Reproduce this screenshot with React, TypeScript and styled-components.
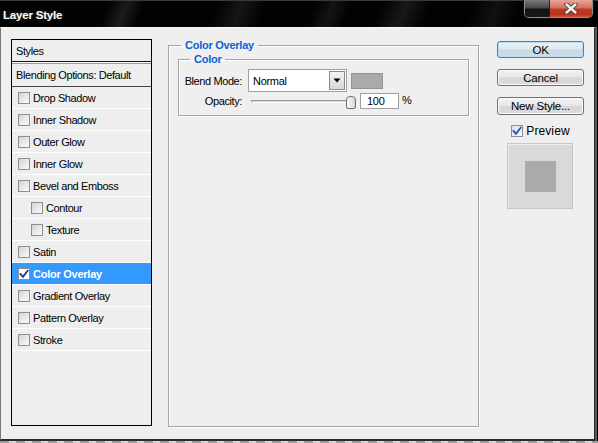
import React from "react";
import styled, { createGlobalStyle } from "styled-components";

const Global = createGlobalStyle`
  html, body { margin: 0; padding: 0; background: #000; }
  body { font-family: "Liberation Sans", Arial, sans-serif; font-size: 11px; color: #000; }
  * { box-sizing: border-box; }
`;

const Screen = styled.div`
  width: 598px;
  height: 443px;
  overflow: hidden;
  background: repeating-linear-gradient(90deg, #9c9c9c 0 9px, #d8d8d8 9px 16px);
`;

const Window = styled.div`
  width: 598px;
  height: 441px;
  display: flex;
  flex-direction: column;
  background: #5a5a5a;
  border-right: 1px solid #000;
`;

const TitleBar = styled.div`
  height: 27px;
  flex: none;
  display: flex;
  align-items: flex-start;
  margin-right: -1px;
  background:
    linear-gradient(112deg, transparent 0 18%, rgba(255,255,255,0.10) 21%, transparent 24%,
      transparent 36%, rgba(255,255,255,0.08) 40%, transparent 44%,
      transparent 52%, rgba(255,255,255,0.07) 55%, transparent 58%,
      transparent 63%, rgba(255,255,255,0.09) 67%, transparent 71%,
      transparent 78%, rgba(255,255,255,0.06) 82%, transparent 86%),
    #020202;
  border-top: 1px solid #3a3a3a;
`;

const Title = styled.div`
  font-weight: 700;
  font-size: 11.5px;
  letter-spacing: -0.2px;
  color: #fff;
  padding: 8px 0 0 3px;
  flex: 1;
  text-shadow: 0 0 4px rgba(255,255,255,0.25);
`;

const Controls = styled.div`
  display: flex;
  height: 18px;
  margin-top: -1px;
  margin-right: 5px;
  border: 1px solid #8a8a8a;
  border-top: none;
  border-radius: 0 0 5px 5px;
  overflow: hidden;
  box-shadow: 0 0 0 1px #111;
`;

const CtrlButton = styled.div<{ $close?: boolean }>`
  width: ${(p) => (p.$close ? 43 : 24)}px;
  display: flex;
  align-items: center;
  justify-content: center;
  border-left: ${(p) => (p.$close ? "1px solid #222" : "none")};
  background: ${(p) =>
    p.$close
      ? "linear-gradient(#e7a79a 0%, #d5705c 45%, #c23a20 55%, #b8341c 85%, #d8563c 100%)"
      : "linear-gradient(#7a7a7a 0%, #4a4a4a 45%, #111 55%, #1a1a1a 100%)"};
`;

const Body = styled.div`
  flex: 1;
  display: flex;
  align-items: flex-start;
  background: #efefef;
  border-left: 1px solid #777;
  border-right: 1px solid #2a2a2a;
  border-bottom: 2px solid #2a2a2a;
  border-top: 1px solid #fafafa;
  margin-right: 2px;
  padding: 11px 0 0 10px;
`;

/* Left styles list */
const StylesPanel = styled.div`
  width: 141px;
  height: 387px;
  border: 1px solid #000;
  background: #eeeeee;
  display: flex;
  flex-direction: column;
  flex: none;
`;

const PanelHeader = styled.div`
  height: 22px;
  display: flex;
  align-items: center;
  padding-left: 4px;
  letter-spacing: -0.4px;
  border-bottom: 1px solid #111;
`;

const HeaderDivider = styled.div`
  height: 1px;
  box-sizing: content-box;
  background: #fafafa;
  border-bottom: 1px solid #9a9a9a;
`;

const BlendRow = styled.div`
  height: 23px;
  display: flex;
  align-items: center;
  padding-left: 4px;
  letter-spacing: -0.4px;
  border-bottom: 1px solid #444;
`;

const StyleRow = styled.div<{ $indent?: boolean; $active?: boolean }>`
  height: 22px;
  display: flex;
  align-items: center;
  gap: 3px;
  padding-left: ${(p) => (p.$indent ? 19 : 6)}px;
  border-bottom: 1px solid #ffffff;
  background: ${(p) => (p.$active ? "#3399ff" : "transparent")};
  color: ${(p) => (p.$active ? "#fff" : "#000")};
  font-weight: ${(p) => (p.$active ? 700 : 400)};
  letter-spacing: ${(p) => (p.$active ? "-0.25px" : "-0.4px")};
`;

const Box = styled.span<{ $checked?: boolean; $blue?: boolean }>`
  width: 12px;
  height: 12px;
  flex: none;
  border: 1px solid #8e8e8e;
  display: flex;
  align-items: center;
  justify-content: center;
  background: ${(p) =>
    p.$checked
      ? p.$blue
        ? "linear-gradient(135deg, #d6e2f0, #f6f9fc)"
        : "#ffffff"
      : "linear-gradient(135deg, #d2d2d2 0%, #e8e8e8 50%, #fbfbfb 100%)"};
`;

/* Middle group */
const Group = styled.fieldset`
  margin: 0 0 0 16px;
  padding: 0 9px 0 9px;
  width: 311px;
  height: 388px;
  flex: none;
  border: 1px solid #a4a4a4;
  box-shadow: 1px 1px 0 #ffffff, inset 1px 1px 0 #ffffff;
  min-inline-size: 0;
`;

const Legend = styled.legend<{ $offset: number }>`
  margin-left: ${(p) => p.$offset}px;
  padding: 0 4px;
  height: 13px;
  line-height: 13px;
  font-weight: 700;
  font-size: 11px;
  letter-spacing: -0.25px;
  color: #0a64d0;
`;

const SubGroup = styled.fieldset`
  margin: 1px 0 0 0;
  padding: 0 0 6px 0;
  width: 291px;
  border: 1px solid #a4a4a4;
  box-shadow: 1px 1px 0 #ffffff, inset 1px 1px 0 #ffffff;
  min-inline-size: 0;
`;

const FieldRow = styled.div<{ $top: number; $h: number }>`
  display: flex;
  align-items: center;
  height: ${(p) => p.$h}px;
  margin-top: ${(p) => p.$top}px;
`;

const Label = styled.div<{ $w: number; $gap: number }>`
  width: ${(p) => p.$w}px;
  margin-right: ${(p) => p.$gap}px;
  text-align: right;
  letter-spacing: -0.4px;
  flex: none;
`;

const Select = styled.div`
  width: 99px;
  height: 23px;
  background: #fff;
  border: 1px solid #a0a0a0;
  display: flex;
  align-items: center;
  padding: 1px;
  flex: none;
`;

const SelectText = styled.div`
  flex: 1;
  padding-left: 3px;
  letter-spacing: -0.3px;
`;

const SelectButton = styled.div`
  width: 16px;
  height: 19px;
  border: 1px solid #8a8a8a;
  background: linear-gradient(#f4f4f4, #d8d8d8);
  display: flex;
  align-items: center;
  justify-content: center;
`;

const Swatch = styled.div`
  width: 32px;
  height: 16px;
  margin-left: 4px;
  background: #aaaaaa;
  border: 1px solid #959595;
`;

const Slider = styled.div`
  position: relative;
  width: 105px;
  height: 16px;
  flex: none;
  display: flex;
  align-items: center;
`;

const Track = styled.div`
  width: 100px;
  height: 3px;
  margin-top: 1px;
  border-top: 1px solid #9c9c9c;
  border-left: 1px solid #9c9c9c;
  border-bottom: 1px solid #ffffff;
  background: #d4d4d4;
`;

const Thumb = styled.div`
  position: absolute;
  left: 95px;
  top: 3px;
  width: 10px;
  height: 13px;
  border: 1px solid #6e6e6e;
  border-radius: 4px 4px 2px 2px;
  background: linear-gradient(90deg, #fafafa, #d6d6d6);
`;

const NumInput = styled.div`
  width: 39px;
  height: 16px;
  margin-left: 4px;
  padding-left: 6px;
  background: #fff;
  border: 1px solid #a0a0a0;
  display: flex;
  align-items: center;
  letter-spacing: -0.3px;
`;

const Percent = styled.div`
  margin-left: 3px;
  margin-top: -3px;
`;

/* Right column */
const Actions = styled.div`
  width: 87px;
  margin-left: 18px;
  margin-top: 2px;
  display: flex;
  flex-direction: column;
  align-items: center;
  flex: none;
`;

const Button = styled.div<{ $primary?: boolean; $h?: number }>`
  width: 87px;
  height: ${(p) => p.$h ?? 17}px;
  margin-bottom: 11px;
  border: 1px solid ${(p) => (p.$primary ? "#3c86c2" : "#707070")};
  border-radius: 3px;
  display: flex;
  align-items: center;
  justify-content: center;
  font-size: 11.5px;
  letter-spacing: -0.2px;
  background: ${(p) =>
    p.$primary
      ? "linear-gradient(#eef4f8 0%, #dde8ef 48%, #c9d9e4 52%, #cfdde8 100%)"
      : "linear-gradient(#f3f3f3 0%, #e6e6e6 48%, #d6d6d6 52%, #dcdcdc 100%)"};
  box-shadow: ${(p) => (p.$primary ? "inset 0 0 0 1px #b8dcf3" : "inset 0 0 0 1px #fbfbfb")};
`;

const PreviewToggle = styled.div`
  display: flex;
  align-items: center;
  gap: 3px;
  margin-top: -2px;
  height: 13px;
  font-size: 12px;
  letter-spacing: 0.1px;
`;

const PreviewBox = styled.div`
  width: 66px;
  height: 66px;
  margin-top: 6px;
  margin-left: -1px;
  background: #d9d9d9;
  border: 1px solid #c6c6c6;
  box-shadow: inset 1px 1px 0 #ececec;
  display: flex;
  align-items: center;
  justify-content: center;
`;

const PreviewSwatch = styled.div`
  width: 31px;
  height: 31px;
  background: #aaaaaa;
`;

const Check = ({ color }: { color: string }) => (
  <svg width="10" height="10" viewBox="0 0 10 10">
    <path d="M1.5 5 L4 7.8 L8.6 1.8" fill="none" stroke={color} strokeWidth="1.9" strokeLinecap="square" />
  </svg>
);

const CloseGlyph = () => (
  <svg width="16" height="11" viewBox="0 0 16 11">
    <path d="M3.5 1.5 L12.5 9.5 M12.5 1.5 L3.5 9.5" stroke="#3a3a3a" strokeWidth="4.2" strokeLinecap="round" />
    <path d="M3.5 1.5 L12.5 9.5 M12.5 1.5 L3.5 9.5" stroke="#f4f4f4" strokeWidth="2.4" strokeLinecap="round" />
  </svg>
);

const Arrow = () => (
  <svg width="8" height="5" viewBox="0 0 8 5">
    <path d="M0.5 0.5 H7.5 L4 4.5 Z" fill="#000" />
  </svg>
);

const styleItems: { label: string; indent?: boolean; active?: boolean }[] = [
  { label: "Drop Shadow" },
  { label: "Inner Shadow" },
  { label: "Outer Glow" },
  { label: "Inner Glow" },
  { label: "Bevel and Emboss" },
  { label: "Contour", indent: true },
  { label: "Texture", indent: true },
  { label: "Satin" },
  { label: "Color Overlay", active: true },
  { label: "Gradient Overlay" },
  { label: "Pattern Overlay" },
  { label: "Stroke" },
];

export default function App() {
  return (
    <Screen>
      <Global />
      <Window>
        <TitleBar>
          <Title>Layer Style</Title>
          <Controls>
            <CtrlButton />
            <CtrlButton $close>
              <CloseGlyph />
            </CtrlButton>
          </Controls>
        </TitleBar>
        <Body>
          <StylesPanel>
            <PanelHeader>Styles</PanelHeader>
            <HeaderDivider />
            <BlendRow>Blending Options: Default</BlendRow>
            {styleItems.map((it) => (
              <StyleRow key={it.label} $indent={it.indent} $active={it.active}>
                <Box $checked={it.active}>{it.active && <Check color="#23399a" />}</Box>
                {it.label}
              </StyleRow>
            ))}
          </StylesPanel>

          <Group>
            <Legend $offset={3}>Color Overlay</Legend>
            <SubGroup>
              <Legend $offset={11}>Color</Legend>
              <FieldRow $top={3} $h={23}>
                <Label $w={63} $gap={6}>Blend Mode:</Label>
                <Select>
                  <SelectText>Normal</SelectText>
                  <SelectButton>
                    <Arrow />
                  </SelectButton>
                </Select>
                <Swatch />
              </FieldRow>
              <FieldRow $top={1} $h={16}>
                <Label $w={63} $gap={9}>Opacity:</Label>
                <Slider>
                  <Track />
                  <Thumb />
                </Slider>
                <NumInput>100</NumInput>
                <Percent>%</Percent>
              </FieldRow>
            </SubGroup>
          </Group>

          <Actions>
            <Button $primary>OK</Button>
            <Button>Cancel</Button>
            <Button $h={18}>New Style...</Button>
            <PreviewToggle>
              <Box $checked $blue>
                <Check color="#2a52c8" />
              </Box>
              Preview
            </PreviewToggle>
            <PreviewBox>
              <PreviewSwatch />
            </PreviewBox>
          </Actions>
        </Body>
      </Window>
    </Screen>
  );
}
